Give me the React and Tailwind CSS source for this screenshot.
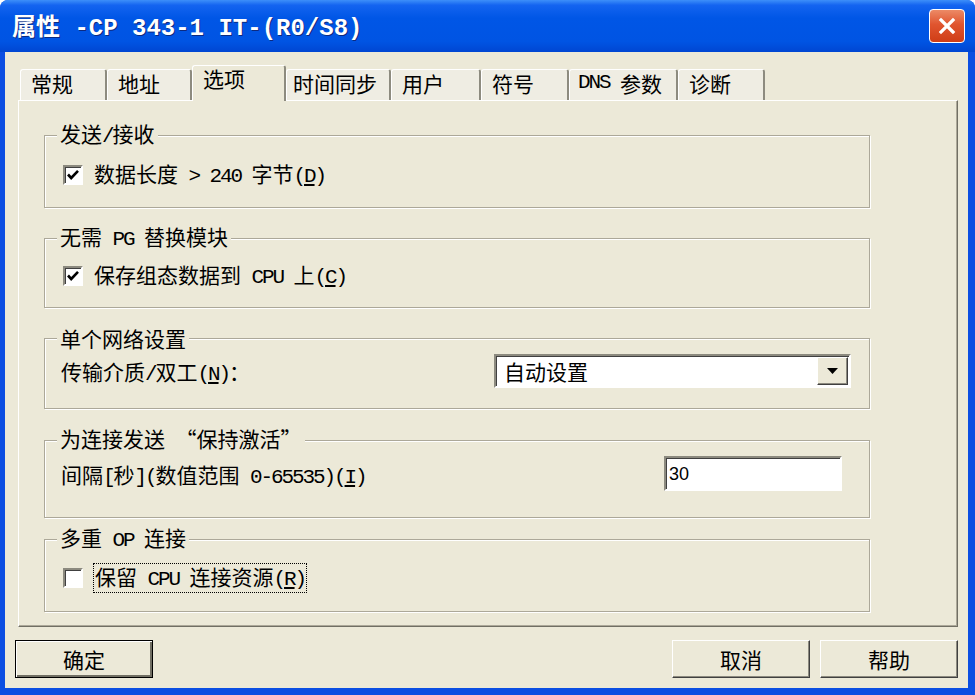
import clsx from "clsx"

const FONT = "font-['Noto_Sans_CJK_SC',sans-serif]"

// Texto mixto: ASCII en mono (medio ancho), CJK en Noto; "&X" subraya X
function Txt({ s, tight = true }) {
  const runs = []
  for (let i = 0; i < s.length; i++) {
    let ch = s[i]
    let u = false
    if (ch === "&") {
      u = true
      ch = s[++i]
    }
    const a = ch.charCodeAt(0) < 128
    const last = runs[runs.length - 1]
    if (last && last.a === a && !u && !last.u) last.t += ch
    else runs.push({ t: ch, a, u })
  }
  return runs.map((r, i) => (
    <span
      key={i}
      className={clsx(
        r.a && "whitespace-pre font-['Liberation_Mono',monospace]",
        r.a && tight && "tracking-[-0.1em]",
        r.u && "underline underline-offset-2"
      )}
    >
      {r.t}
    </span>
  ))
}

const TABS = [
  { t: "常规", w: "w-[87px]" },
  { t: "地址", w: "w-[85px]" },
  { t: "选项", w: "w-[94px]", on: true },
  { t: "时间同步", w: "w-[105px]", pl: "pl-[6px]" },
  { t: "用户", w: "w-[90px]" },
  { t: "符号", w: "w-[88px]" },
  { t: "DNS 参数", w: "w-[109px]", pl: "pl-[8px]" },
  { t: "诊断", w: "w-[87px]" },
]

const sunken =
  "border-2 border-t-[#8c8a7f] border-l-[#8c8a7f] border-b-white border-r-white bg-white shadow-[inset_1px_1px_0_#404040]"

function Check({ on }) {
  return (
    <span className={clsx("flex h-[20px] w-[20px] shrink-0 items-center justify-center", sunken)}>
      {on && (
        <svg width="14" height="14" viewBox="0 0 14 14">
          <polyline points="2,6.5 5.2,10 12,2.8" fill="none" stroke="#000" strokeWidth="2.6" />
        </svg>
      )}
    </span>
  )
}

function Group({ title, className, children }) {
  return (
    <fieldset
      className={clsx(
        "w-[826px] border border-[#aca899] shadow-[inset_1px_1px_0_#fff,1px_1px_0_#fff]",
        className
      )}
    >
      <legend className="ml-[12px] bg-[#ECE9D8] px-[3px] text-[21px] leading-[24px]">
        <Txt s={title} />
      </legend>
      {children}
    </fieldset>
  )
}

function Btn({ label, def }) {
  return (
    <button
      className={clsx(
        "flex h-[38px] w-[138px] items-center justify-center bg-[#ECE9D8] text-[21px] leading-[24px]",
        def
          ? "border border-black shadow-[inset_1px_1px_0_#fff,inset_-2px_-2px_0_#716f64]"
          : "border border-t-white border-l-white border-r-[#404040] border-b-[#404040] shadow-[inset_-1px_-1px_0_#8c8a7f]"
      )}
    >
      {label}
    </button>
  )
}

export default function App() {
  return (
    <div
      className={clsx(
        "flex h-[695px] w-[975px] flex-col overflow-hidden rounded-t-[8px] bg-[#0b4ee2] text-black",
        FONT
      )}
    >
      {/* barra de título */}
      <div className="flex h-[52px] shrink-0 items-center justify-between bg-[linear-gradient(to_bottom,#3d8ff9_0%,#1464f0_10%,#0056e6_35%,#0054e3_80%,#0046d2_100%)] pl-[12px] pr-[10px]">
        <span className="pt-[2px] text-[24px] font-bold leading-[28px] text-white [text-shadow:1px_1px_0_#0c2a80]">
          <Txt s="属性 -CP 343-1 IT-(R0/S8)" tight={false} />
        </span>
        <span className="flex h-[34px] w-[36px] items-center justify-center rounded-[4px] border border-white bg-[linear-gradient(to_bottom,#ec8a66_0%,#e0552f_45%,#cf3d16_100%)]">
          <svg width="18" height="18" viewBox="0 0 18 18">
            <path d="M3 3 L15 15 M15 3 L3 15" stroke="#fff" strokeWidth="3.2" strokeLinecap="square" />
          </svg>
        </span>
      </div>

      {/* cuerpo */}
      <div className="mb-[7px] ml-[5px] mr-[7px] flex-1 bg-[#ECE9D8] px-[10px] pt-[13px]">
        <div className="ml-[5px] flex h-[35px] items-end">
          {TABS.map((tab) => (
            <div
              key={tab.t}
              className={clsx(
                "flex shrink-0 items-start rounded-t-[3px] border-l border-t border-white border-r-2 border-r-[#8d8b7f] text-[21px] leading-[24px]",
                tab.w,
                tab.pl || "pl-[10px]",
                tab.on
                  ? "relative z-10 -mb-px h-[36px] bg-[#ECE9D8]"
                  : "h-[31px] bg-[#efede3] pt-[1px]"
              )}
            >
              <Txt s={tab.t} />
            </div>
          ))}
        </div>

        <div className="ml-[3px] h-[527px] w-[940px] border border-t-white border-l-white border-r-[#716f64] border-b-[#716f64] px-[25px] shadow-[inset_-1px_-1px_0_#aca899]">
          <Group title="发送/接收" className="mt-[20px] h-[87px]">
            <div className="flex items-center gap-[11px] pl-[18px] pt-[12px] text-[21px] leading-[24px]">
              <Check on />
              <span>
                <Txt s="数据长度 > 240 字节(&D)" />
              </span>
            </div>
          </Group>

          <Group title="无需 PG 替换模块" className="mt-[16px] h-[84px]">
            <div className="flex items-center gap-[11px] pl-[18px] pt-[10px] text-[21px] leading-[24px]">
              <Check on />
              <span>
                <Txt s="保存组态数据到 CPU 上(&C)" />
              </span>
            </div>
          </Group>

          <Group title="单个网络设置" className="mt-[18px] h-[83px]">
            <div className="flex items-center pl-[16px] pt-[4px] text-[21px] leading-[24px]">
              <span className="pt-[3px]">
                <Txt s="传输介质/双工(&N)：" />
              </span>
              <div className={clsx("ml-auto mr-[18px] flex h-[34px] w-[357px] items-center", sunken)}>
                <span className="flex-1 pl-[8px]">自动设置</span>
                <span className="mr-[1px] flex h-[28px] w-[31px] items-center justify-center border border-t-white border-l-white border-r-[#404040] border-b-[#404040] bg-[#ECE9D8] shadow-[inset_-1px_-1px_0_#8c8a7f]">
                  <svg width="11" height="6" viewBox="0 0 11 6">
                    <polygon points="0,0 11,0 5.5,6" fill="#000" />
                  </svg>
                </span>
              </div>
            </div>
          </Group>

          <Group title="为连接发送 “保持激活”" className="mt-[17px] h-[92px]">
            <div className="flex items-center pl-[16px] pt-[2px] text-[21px] leading-[24px]">
              <span className="pt-[4px]">
                <Txt s="间隔[秒](数值范围 0-65535)(&I)" />
              </span>
              <div className={clsx("ml-auto mr-[27px] flex h-[35px] w-[178px] items-center pl-[3px]", sunken)}>
                <span className="font-['Liberation_Sans',sans-serif] text-[18px]">30</span>
              </div>
            </div>
          </Group>

          <Group title="多重 OP 连接" className="mt-[7px] h-[87px]">
            <div className="flex items-center gap-[10px] pl-[18px] pt-[10px] text-[21px] leading-[24px]">
              <Check />
              <span className="border border-dotted border-black px-[1px]">
                <Txt s="保留 CPU 连接资源(&R)" />
              </span>
            </div>
          </Group>
        </div>

        <div className="mt-[13px] flex items-center">
          <Btn label="确定" def />
          <div className="ml-auto flex gap-[10px]">
            <Btn label="取消" />
            <Btn label="帮助" />
          </div>
        </div>
      </div>
    </div>
  )
}
